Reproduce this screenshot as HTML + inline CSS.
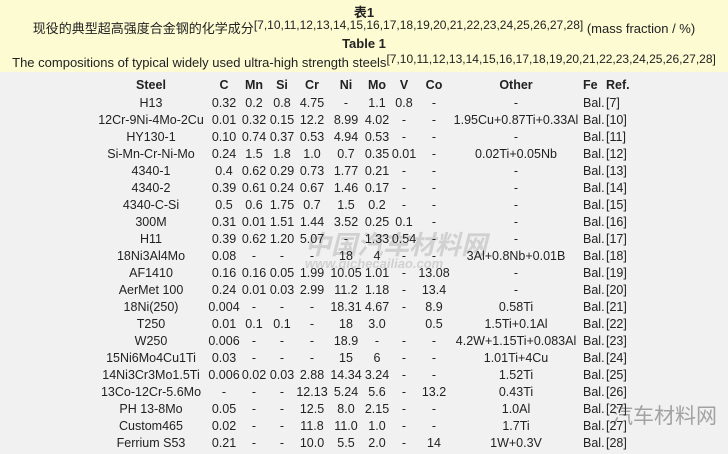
<!DOCTYPE html>
<html><head><meta charset="utf-8"><style>
body{margin:0;width:728px;height:454px;overflow:hidden;background:#f1f1f1;font-family:"Liberation Sans","Noto Sans CJK SC",sans-serif;font-size:12.5px;color:#222;position:relative}
.top{position:absolute;left:0;top:0;width:728px;height:72px;background:#fdfbd2}
.t{position:absolute;left:0;width:728px;text-align:center;white-space:nowrap;font-size:13px}
sup{font-size:12px;vertical-align:4px}
.r{position:absolute;left:0;width:728px;height:17px;line-height:17px}
.r span{position:absolute;text-align:center;white-space:nowrap;transform:translateX(-50%)}
.r span.l{transform:none;text-align:left}
.h{font-weight:bold}
.wm{position:absolute;color:rgba(150,150,150,.35);font-weight:bold;white-space:nowrap}
</style></head><body>
<div class="top"></div>
<div class="t h" style="top:2px">表1</div>
<div class="t" style="top:18px">现役的典型超高强度合金钢的化学成分<sup>[7,10,11,12,13,14,15,16,17,18,19,20,21,22,23,24,25,26,27,28]</sup> (mass fraction / %)</div>
<div class="t h" style="top:36px">Table 1</div>
<div class="t" style="top:52px">The compositions of typical widely used ultra-high strength steels<sup>[7,10,11,12,13,14,15,16,17,18,19,20,21,22,23,24,25,26,27,28]</sup></div>
<div class="wm" style="left:305px;top:225px;font-size:26px;font-style:italic">中国汽车材料网</div>
<div class="wm" style="left:305px;top:256px;font-size:13px;font-style:italic">www.qichecailiao.com</div>
<div class="wm" style="left:612px;top:400px;font-size:21px;color:rgba(110,110,110,.6);font-weight:normal">汽车材料网</div>
<div id="rows"></div>
<script>
var cols=[151,224,254,282,312,346,377,404,434,516];
var d=[
["Steel","C","Mn","Si","Cr","Ni","Mo","V","Co","Other","Fe","Ref."],
["H13","0.32","0.2","0.8","4.75","-","1.1","0.8","-","-","Bal.","[7]"],
["12Cr-9Ni-4Mo-2Cu","0.01","0.32","0.15","12.2","8.99","4.02","-","-","1.95Cu+0.87Ti+0.33Al","Bal.","[10]"],
["HY130-1","0.10","0.74","0.37","0.53","4.94","0.53","-","-","-","Bal.","[11]"],
["Si-Mn-Cr-Ni-Mo","0.24","1.5","1.8","1.0","0.7","0.35","0.01","-","0.02Ti+0.05Nb","Bal.","[12]"],
["4340-1","0.4","0.62","0.29","0.73","1.77","0.21","-","-","-","Bal.","[13]"],
["4340-2","0.39","0.61","0.24","0.67","1.46","0.17","-","-","-","Bal.","[14]"],
["4340-C-Si","0.5","0.6","1.75","0.7","1.5","0.2","-","-","-","Bal.","[15]"],
["300M","0.31","0.01","1.51","1.44","3.52","0.25","0.1","-","-","Bal.","[16]"],
["H11","0.39","0.62","1.20","5.07","-","1.33","0.54","-","-","Bal.","[17]"],
["18Ni3Al4Mo","0.08","-","-","-","18","4","-","-","3Al+0.8Nb+0.01B","Bal.","[18]"],
["AF1410","0.16","0.16","0.05","1.99","10.05","1.01","-","13.08","-","Bal.","[19]"],
["AerMet 100","0.24","0.01","0.03","2.99","11.2","1.18","-","13.4","-","Bal.","[20]"],
["18Ni(250)","0.004","-","-","-","18.31","4.67","-","8.9","0.58Ti","Bal.","[21]"],
["T250","0.01","0.1","0.1","-","18","3.0","","0.5","1.5Ti+0.1Al","Bal.","[22]"],
["W250","0.006","-","-","-","18.9","-","-","-","4.2W+1.15Ti+0.083Al","Bal.","[23]"],
["15Ni6Mo4Cu1Ti","0.03","-","-","-","15","6","-","-","1.01Ti+4Cu","Bal.","[24]"],
["14Ni3Cr3Mo1.5Ti","0.006","0.02","0.03","2.88","14.34","3.24","-","-","1.52Ti","Bal.","[25]"],
["13Co-12Cr-5.6Mo","-","-","-","12.13","5.24","5.6","-","13.2","0.43Ti","Bal.","[26]"],
["PH 13-8Mo","0.05","-","-","12.5","8.0","2.15","-","-","1.0Al","Bal.","[27]"],
["Custom465","0.02","-","-","11.8","11.0","1.0","-","-","1.7Ti","Bal.","[27]"],
["Ferrium S53","0.21","-","-","10.0","5.5","2.0","-","14","1W+0.3V","Bal.","[28]"]];
var h="";
d.forEach(function(r,i){
 var y=i==0?77:95+(i-1)*17;
 h+='<div class="r'+(i==0?' h':'')+'" style="top:'+y+'px">';
 for(var j=0;j<10;j++)h+='<span style="left:'+cols[j]+'px">'+r[j]+'</span>';
 h+='<span class="l" style="left:583px">'+r[10]+'</span><span class="l" style="left:606px">'+r[11]+'</span></div>';
});
document.getElementById('rows').innerHTML=h;
</script>
</body></html>
